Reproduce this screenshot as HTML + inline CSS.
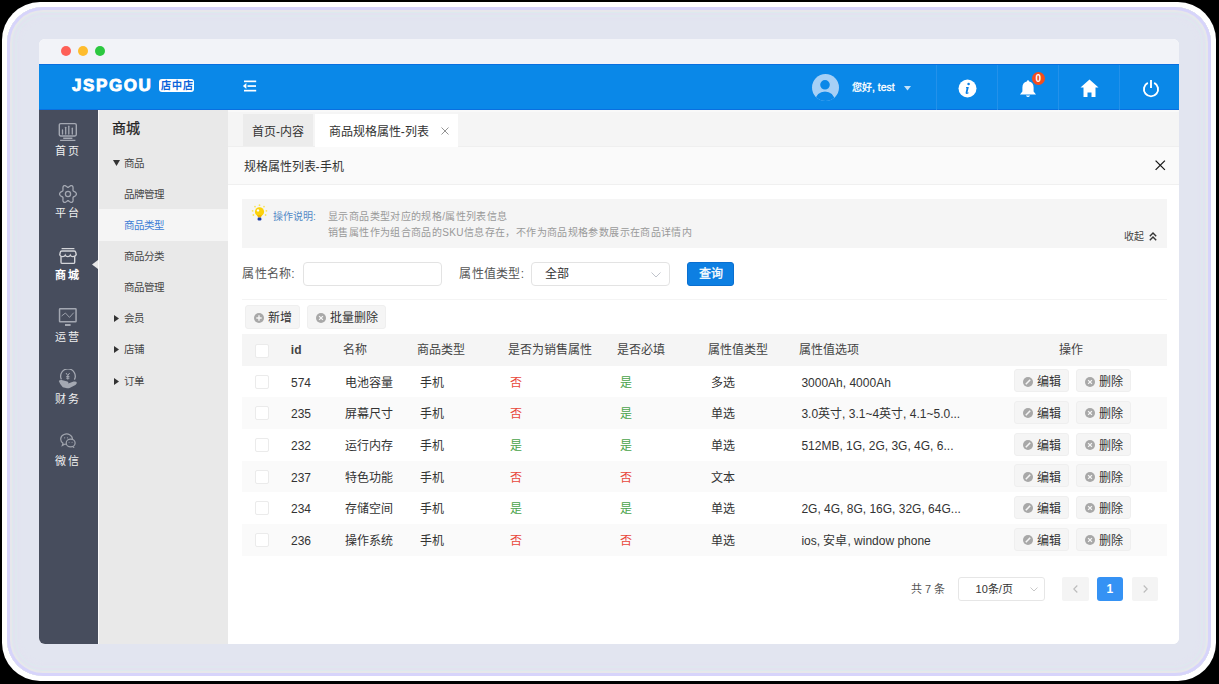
<!DOCTYPE html>
<html lang="zh-CN">
<head>
<meta charset="utf-8">
<style>
*{margin:0;padding:0;box-sizing:border-box;}
html,body{width:1219px;height:684px;overflow:hidden;background:#000;}
body{font-family:"Liberation Sans",sans-serif;position:relative;color:#333;}
.abs{position:absolute;}
#outer{position:absolute;left:2px;top:2px;width:1214px;height:679px;border-radius:38px;background:#fff;}
#glow{position:absolute;left:7px;top:7px;width:1204px;height:669px;border-radius:36px;background:#e2e5f0;
  box-shadow:inset 0 0 0 3px #d7d4fb, inset 0 0 0 5px #e7e7eb, inset 0 0 0 6px #dde9ee, inset 0 0 0 8px #e3e2f0, inset 0 0 0 10px #dfe7ef, inset 0 0 4px 12px #e3e3f0;}
#win{position:absolute;left:39px;top:39px;width:1140px;height:605px;border-radius:6px;overflow:hidden;background:#fff;}
#topbar{position:absolute;left:0;top:0;width:1140px;height:25px;background:#f2f3f8;}
.dot{position:absolute;top:7px;width:10px;height:10px;border-radius:50%;}
#header{position:absolute;left:0;top:25px;width:1140px;height:46px;background:#0a88e8;border-top:1px solid #0a6fe0;border-bottom:1px solid #0a6fe0;}
#side1{position:absolute;left:0;top:71px;width:59px;height:534px;background:#474d5d;}
#side1line{position:absolute;left:59px;top:71px;width:1px;height:534px;background:#fafafa;}
#side2{position:absolute;left:60px;top:71px;width:129px;height:534px;background:#e9e9e9;}
#main{position:absolute;left:189px;top:71px;width:951px;height:534px;background:#fff;}
.t{position:absolute;white-space:nowrap;line-height:1;}
.td{font-size:12px;color:#333;}
.th{font-size:12px;color:#444;}
.cb{width:14px;height:14px;border:1px solid #ebebeb;background:#fff;border-radius:2px;}
.btn{background:#f5f5f5;border-radius:3px;border:1px solid #efefef;}
</style>
</head>
<body>
<div id="outer"></div>
<div id="glow"></div>
<div id="win">
  <div id="topbar">
    <div class="dot" style="left:22px;background:#fe5f57;"></div>
    <div class="dot" style="left:39px;background:#febc2e;"></div>
    <div class="dot" style="left:56px;background:#2cc840;"></div>
  </div>
  <div id="header">
    <div class="t" style="left:33px;top:12px;font-size:17px;font-weight:bold;color:#fff;letter-spacing:1.6px;-webkit-text-stroke:0.9px #fff;">JSPGOU</div>
    <div class="abs" style="left:120px;top:14px;width:35px;height:13px;background:#fff;border-radius:3px;"></div>
    <div class="t" style="left:121.6px;top:15.5px;font-size:10px;font-weight:bold;color:#0a62da;letter-spacing:1.1px;">店中店</div>
    <svg class="abs" style="left:203px;top:13px;" width="16" height="16" viewBox="0 0 16 16">
      <rect x="2" y="2.5" width="12.2" height="1.7" fill="#fff"/>
      <rect x="5.5" y="7.2" width="8.5" height="1.7" fill="#fff"/>
      <path d="M0.9 8 L4.4 5.1 L4.4 10.9 Z" fill="#fff"/>
      <rect x="2" y="11.8" width="12.2" height="1.7" fill="#fff"/>
    </svg>
    <div class="abs" style="left:772.5px;top:8.5px;width:27px;height:27px;border-radius:50%;overflow:hidden;background:#a6d0f6;">
      <svg class="abs" style="left:-0.5px;top:-0.5px;" width="28" height="28" viewBox="0 0 28 28">
        <ellipse cx="14" cy="27.6" rx="10.4" ry="10" fill="#0a88e8" stroke="#a6d0f6" stroke-width="1.6"/>
        <circle cx="14" cy="11.8" r="5.6" fill="#0a88e8" stroke="#a6d0f6" stroke-width="1.6"/>
      </svg>
    </div>
    <div class="t" style="left:813px;top:17.5px;font-size:10px;color:#fff;-webkit-text-stroke:0.3px #fff;">您好<span style="font-size:10.4px;">, test</span></div>
    <svg class="abs" style="left:864.5px;top:21px;" width="7" height="5" viewBox="0 0 7 5"><path d="M0 0 L7 0 L3.5 4.5Z" fill="#c4e2fa"/></svg>
    <div class="abs" style="left:897px;top:0;width:1px;height:46px;background:#2391ea;"></div>
    <div class="abs" style="left:958px;top:0;width:1px;height:46px;background:#2391ea;"></div>
    <div class="abs" style="left:1019px;top:0;width:1px;height:46px;background:#2391ea;"></div>
    <div class="abs" style="left:1080px;top:0;width:1px;height:46px;background:#2391ea;"></div>
    <svg class="abs" style="left:919px;top:14px;" width="19" height="19" viewBox="0 0 19 19">
      <circle cx="9.5" cy="9.5" r="9" fill="#fff"/>
      <circle cx="10.6" cy="5" r="1.3" fill="#0a80e6"/>
      <path d="M8.2 8 L10.8 8 L9.6 13 Q9.4 14 10.4 13.4 L10.8 13.2 L10.6 14.2 Q9 15.3 8 14.8 Q7.4 14.4 7.7 13.3 L8.6 9.2 L7.9 9.2 Z" fill="#0a80e6"/>
    </svg>
    <svg class="abs" style="left:980px;top:14px;" width="18" height="19" viewBox="0 0 18 19">
      <path d="M9 1.2 Q10 1.2 10.2 2.4 Q14.6 3.4 14.6 8.6 L14.6 12.6 L17 15.6 L1 15.6 L3.4 12.6 L3.4 8.6 Q3.4 3.4 7.8 2.4 Q8 1.2 9 1.2 Z" fill="#fff"/>
      <path d="M6.8 16.4 Q9 19.6 11.2 16.4 Z" fill="#fff"/>
    </svg>
    <div class="abs" style="left:993px;top:7px;width:13px;height:13px;border-radius:50%;background:#f34d1c;"></div>
    <div class="t" style="left:996.5px;top:8.5px;font-size:10px;font-weight:bold;color:#fff;">0</div>
    <svg class="abs" style="left:1041px;top:14px;" width="19" height="19" viewBox="0 0 19 19">
      <path d="M9.5 0.5 L18.5 8.5 L15.5 8.5 L15.5 18 L11.5 18 L11.5 13.5 L7.5 13.5 L7.5 18 L3.5 18 L3.5 8.5 L0.5 8.5 Z" fill="#fff"/>
    </svg>
    <svg class="abs" style="left:1103px;top:13.5px;" width="18" height="19" viewBox="0 0 18 19">
      <path d="M5.8 3.9 A7.1 7.1 0 1 0 12.2 3.9" fill="none" stroke="#fff" stroke-width="1.9"/>
      <line x1="9" y1="0.9" x2="9" y2="9" stroke="#fff" stroke-width="1.9"/>
    </svg>
  </div>
  <div id="side1">
    <svg class="abs" style="left:19px;top:12px;" width="20" height="20" viewBox="0 0 20 20" fill="none" stroke="#a4a8b2" stroke-width="1.4">
      <rect x="1.3" y="1.6" width="17" height="12.4" rx="1.4"/>
      <g stroke-width="1.3" stroke-linecap="round"><line x1="4.5" y1="12" x2="4.5" y2="8"/><line x1="7.7" y1="12" x2="7.7" y2="5.3"/><line x1="10.8" y1="12" x2="10.8" y2="4.2"/><line x1="14.3" y1="12" x2="14.3" y2="6.2"/></g>
      <line x1="5.2" y1="16.2" x2="14.4" y2="16.2"/>
      <line x1="2.1" y1="18.4" x2="17.4" y2="18.4"/>
    </svg>
    <div class="t" style="left:16px;top:36px;font-size:11px;color:#f0f0f0;letter-spacing:1.6px;">首页</div>
    <svg class="abs" style="left:19px;top:74px;" width="20" height="20" viewBox="0 0 20 20" fill="none" stroke="#a4a8b2" stroke-width="1.3">
      <path d="M18.40 10.00 L18.33 10.49 L18.12 10.96 L17.80 11.39 L17.39 11.77 L16.93 12.09 L16.46 12.36 L16.02 12.60 L15.65 12.83 L15.35 13.07 L15.15 13.35 L15.04 13.68 L15.00 14.09 L15.01 14.57 L15.05 15.12 L15.07 15.71 L15.05 16.32 L14.97 16.91 L14.80 17.44 L14.54 17.88 L14.20 18.19 L13.79 18.37 L13.32 18.40 L12.83 18.30 L12.33 18.09 L11.86 17.80 L11.41 17.48 L11.01 17.18 L10.65 16.92 L10.31 16.75 L10.00 16.70 L9.69 16.75 L9.35 16.92 L8.99 17.18 L8.59 17.48 L8.14 17.80 L7.67 18.09 L7.17 18.30 L6.68 18.40 L6.21 18.37 L5.80 18.19 L5.46 17.88 L5.20 17.44 L5.03 16.91 L4.95 16.32 L4.93 15.71 L4.95 15.12 L4.99 14.57 L5.00 14.09 L4.96 13.68 L4.85 13.35 L4.65 13.07 L4.35 12.83 L3.98 12.60 L3.54 12.36 L3.07 12.09 L2.61 11.77 L2.20 11.39 L1.88 10.96 L1.67 10.49 L1.60 10.00 L1.67 9.51 L1.88 9.04 L2.20 8.61 L2.61 8.23 L3.07 7.91 L3.54 7.64 L3.98 7.40 L4.35 7.17 L4.65 6.93 L4.85 6.65 L4.96 6.32 L5.00 5.91 L4.99 5.43 L4.95 4.88 L4.93 4.29 L4.95 3.68 L5.03 3.09 L5.20 2.56 L5.46 2.12 L5.80 1.81 L6.21 1.63 L6.68 1.60 L7.17 1.70 L7.67 1.91 L8.14 2.20 L8.59 2.52 L8.99 2.82 L9.35 3.08 L9.69 3.25 L10.00 3.30 L10.31 3.25 L10.65 3.08 L11.01 2.82 L11.41 2.52 L11.86 2.20 L12.33 1.91 L12.83 1.70 L13.32 1.60 L13.79 1.63 L14.20 1.81 L14.54 2.12 L14.80 2.56 L14.97 3.09 L15.05 3.68 L15.07 4.29 L15.05 4.88 L15.01 5.43 L15.00 5.91 L15.04 6.32 L15.15 6.65 L15.35 6.93 L15.65 7.17 L16.02 7.40 L16.46 7.64 L16.93 7.91 L17.39 8.23 L17.80 8.61 L18.12 9.04 L18.33 9.51Z"/>
      <circle cx="10" cy="10" r="2.6"/>
    </svg>
    <div class="t" style="left:16px;top:98px;font-size:11px;color:#f0f0f0;letter-spacing:1.6px;">平台</div>
    <svg class="abs" style="left:20px;top:137px;" width="19" height="19" viewBox="0 0 19 19" fill="none" stroke="#d4d5d9" stroke-width="1.4">
      <line x1="2.6" y1="1.6" x2="15.4" y2="1.6"/>
      <path d="M0.8 7.8 Q1.2 9.6 3.7 9.6 Q5.6 9.6 6.25 8.2 Q6.9 9.6 8.8 9.6 Q10.7 9.6 11.3 8.2 Q11.9 9.6 13.8 9.6 Q16.6 9.6 17.2 7.8 L16.8 5.6 Q16.5 4 15.2 4 L2.8 4 Q1.5 4 1.2 5.6 Z"/>
      <path d="M2 9.8 V15.2 Q2 16.4 3.3 16.4 H14.4 Q15.7 16.4 15.7 15.2 V9.8"/>
    </svg>
    <div class="t" style="left:16px;top:160px;font-size:11px;color:#fff;letter-spacing:1.6px;font-weight:bold;">商城</div>
    <svg class="abs" style="left:19px;top:197px;" width="20" height="20" viewBox="0 0 20 20" fill="none" stroke="#a4a8b2" stroke-width="1.5">
      <rect x="1.55" y="1.85" width="16.5" height="13" rx="0.6"/>
      <path d="M3.6 9 L7.4 6 L11.5 10.4 L15.7 5.7" stroke-width="0.9"/>
      <rect x="7" y="17" width="5.6" height="2" fill="#a4a8b2" stroke="none"/>
    </svg>
    <div class="t" style="left:16px;top:222px;font-size:11px;color:#f0f0f0;letter-spacing:1.6px;">运营</div>
    <svg class="abs" style="left:19px;top:259px;" width="20" height="20" viewBox="0 0 20 20" fill="none" stroke="#a4a8b2" stroke-width="1.3">
      <path d="M3.4 10.4 A7.3 7.3 0 1 1 16.4 10.6"/>
      <path d="M8 4 L9.8 6.6 L11.6 4 M9.8 6.6 V10.6 M8.2 7.6 H11.4 M8.2 9.2 H11.4" stroke-width="1"/>
      <path d="M0.8 12 Q1.6 10.8 3.6 11 L9.4 12.6 Q11 13.2 10.2 14.4 L15.6 12.6 Q18.4 12 18.8 13.6 Q19 15 17.4 16 L11.6 19 Q10 19.4 8 19 L4.8 18.2 Q2 15.6 0.8 12 Z" fill="#a4a8b2" stroke="none"/>
    </svg>
    <div class="t" style="left:16px;top:284px;font-size:11px;color:#f0f0f0;letter-spacing:1.6px;">财务</div>
    <svg class="abs" style="left:21px;top:322.5px;" width="16" height="15.2" viewBox="0 0 18 17" fill="none" stroke="#a0a4ad" stroke-width="1.35">
      <path d="M14 6.8 A6.6 5.8 0 1 0 3.4 11.4 L2.6 14 L5.6 12.4 Q6.4 12.7 7.2 12.8"/>
      <ellipse cx="12" cy="11.2" rx="5" ry="4.4" />
      <path d="M14.8 15.2 L15.8 16.6"/>
      <circle cx="5.2" cy="5.4" r="0.7" fill="#9a9ea8" stroke="none"/>
      <circle cx="8.4" cy="5.4" r="0.7" fill="#9a9ea8" stroke="none"/>
      <circle cx="10.2" cy="10.4" r="0.6" fill="#9a9ea8" stroke="none"/>
      <circle cx="13.6" cy="10.4" r="0.6" fill="#9a9ea8" stroke="none"/>
    </svg>
    <div class="t" style="left:16px;top:346px;font-size:11px;color:#f0f0f0;letter-spacing:1.6px;">微信</div>
    <svg class="abs" style="left:53px;top:150px;" width="6" height="9" viewBox="0 0 6 9"><path d="M6 0 L0 4.5 L6 9 Z" fill="#e9e9e9"/></svg>
  </div>
  <div id="side1line"></div>
  <div id="side2">
    <div class="t" style="left:13px;top:11px;font-size:14px;color:#222;-webkit-text-stroke:0.25px #222;">商城</div>
    <svg class="abs" style="left:14px;top:50px;" width="7" height="6" viewBox="0 0 7 6"><path d="M0 0 L7 0 L3.5 6Z" fill="#333"/></svg>
    <div class="t" style="left:25px;top:48px;font-size:10.5px;color:#444;">商品</div>
    <div class="t" style="left:25px;top:79px;font-size:10.5px;color:#444;">品牌管理</div>
    <div class="abs" style="left:0;top:99px;width:129px;height:32px;background:#f5f5f5;"></div>
    <div class="t" style="left:25px;top:110px;font-size:10.5px;color:#3d7dd6;">商品类型</div>
    <div class="t" style="left:25px;top:141px;font-size:10.5px;color:#444;">商品分类</div>
    <div class="t" style="left:25px;top:172px;font-size:10.5px;color:#444;">商品管理</div>
    <svg class="abs" style="left:15px;top:205px;" width="5" height="7" viewBox="0 0 5 7"><path d="M0 0 L5 3.5 L0 7Z" fill="#333"/></svg>
    <div class="t" style="left:25px;top:203px;font-size:10.5px;color:#444;">会员</div>
    <svg class="abs" style="left:15px;top:236px;" width="5" height="7" viewBox="0 0 5 7"><path d="M0 0 L5 3.5 L0 7Z" fill="#333"/></svg>
    <div class="t" style="left:25px;top:234px;font-size:10.5px;color:#444;">店铺</div>
    <svg class="abs" style="left:15px;top:268px;" width="5" height="7" viewBox="0 0 5 7"><path d="M0 0 L5 3.5 L0 7Z" fill="#333"/></svg>
    <div class="t" style="left:25px;top:266px;font-size:10.5px;color:#444;">订单</div>
  </div>
  <div id="main">
    <div class="abs" style="left:0;top:0;width:951px;height:37px;background:#f5f5f5;border-bottom:1px solid #efefef;"></div><div class="abs" style="left:0;top:0;width:951px;height:2px;background:#f9f9f9;"></div>
    <div class="abs" style="left:14.6px;top:4.2px;width:70.7px;height:32px;background:#ececec;"></div>
    <div class="t" style="left:24px;top:15.5px;font-size:12px;color:#333;">首页-内容</div>
    <div class="abs" style="left:86.7px;top:4.2px;width:143.2px;height:32.8px;background:#fff;"></div>
    <div class="t" style="left:100.7px;top:15.5px;font-size:12px;color:#333;">商品规格属性-列表</div>
    <svg class="abs" style="left:213px;top:17px;" width="8" height="8" viewBox="0 0 8 8"><path d="M0.5 0.5 L7.5 7.5 M7.5 0.5 L0.5 7.5" stroke="#888" stroke-width="0.9"/></svg>
    <div class="abs" style="left:0;top:37px;width:951px;height:38px;background:#fafafa;border-bottom:1px solid #f0f0f0;"></div>
    <div class="t" style="left:15.6px;top:51px;font-size:12px;color:#333;">规格属性列表-手机</div>
    <svg class="abs" style="left:927px;top:50px;" width="10.5" height="10.5" viewBox="0 0 10.5 10.5"><path d="M0.6 0.6 L9.9 9.9 M9.9 0.6 L0.6 9.9" stroke="#1a1a1a" stroke-width="1.3"/></svg>

    <div class="abs" style="left:14px;top:89px;width:925px;height:48.5px;background:#f5f5f5;"></div>
    <svg class="abs" style="left:23px;top:94px;" width="17" height="19" viewBox="0 0 17 19">
      <g fill="#f8e45a"><circle cx="8.5" cy="1.2" r="0.9"/><circle cx="4" cy="2.6" r="0.9"/><circle cx="13" cy="2.6" r="0.9"/><circle cx="1.6" cy="6.8" r="0.9"/><circle cx="15.4" cy="6.8" r="0.9"/><circle cx="2.4" cy="11" r="0.9"/><circle cx="14.6" cy="11" r="0.9"/></g>
      <circle cx="8.5" cy="7.8" r="4.6" fill="#fcd20a"/>
      <path d="M6.2 11 L10.8 11 L10 13.4 L7 13.4 Z" fill="#f2b800"/>
      <circle cx="7" cy="6.4" r="1.2" fill="#fff"/>
      <rect x="6.6" y="13.6" width="3.8" height="2.8" rx="1.2" fill="#1c3aa8"/>
    </svg>
    <div class="t" style="left:44.5px;top:101.5px;font-size:10px;color:#5389c6;letter-spacing:0.15px;">操作说明:</div>
    <div class="t" style="left:100px;top:101.5px;font-size:10px;color:#999;letter-spacing:0.38px;">显示商品类型对应的规格/属性列表信息</div>
    <div class="t" style="left:100px;top:118.2px;font-size:10px;color:#999;letter-spacing:0.38px;">销售属性作为组合商品的SKU信息存在，不作为商品规格参数展示在商品详情内</div>
    <div class="t" style="left:895.6px;top:122px;font-size:10px;color:#444;letter-spacing:0.3px;">收起</div>
    <svg class="abs" style="left:920.5px;top:121.5px;" width="8" height="9" viewBox="0 0 8 9"><path d="M0.8 4.2 L4 1 L7.2 4.2 M0.8 8.2 L4 5 L7.2 8.2" fill="none" stroke="#333" stroke-width="1.4"/></svg>

    <div class="t" style="left:14.3px;top:157.5px;font-size:12px;color:#555;letter-spacing:0.25px;">属性名称:</div>
    <div class="abs" style="left:75px;top:152px;width:139px;height:24px;border:1px solid #e3e3e3;border-radius:4px;background:#fff;"></div>
    <div class="t" style="left:231.4px;top:157.5px;font-size:12px;color:#555;letter-spacing:0.25px;">属性值类型:</div>
    <div class="abs" style="left:303.2px;top:152px;width:138.6px;height:24px;border:1px solid #e3e3e3;border-radius:4px;background:#fff;"></div>
    <div class="t" style="left:316.8px;top:157.5px;font-size:12px;color:#333;">全部</div>
    <svg class="abs" style="left:422.5px;top:161.5px;" width="10" height="6" viewBox="0 0 10 6"><path d="M0.5 0.5 L5 5 L9.5 0.5" fill="none" stroke="#c0c4cc" stroke-width="1"/></svg>
    <div class="abs" style="left:459px;top:151.8px;width:47.3px;height:24.4px;background:#0d7fe2;border-radius:3px;border:1px solid #0a6fd0;"></div>
    <div class="t" style="left:470.5px;top:157.8px;font-size:12px;color:#fff;-webkit-text-stroke:0.3px #fff;">查询</div>
    <div class="abs" style="left:14px;top:189px;width:925px;height:1px;background:#f4f4f4;"></div>

    <div class="abs btn" style="left:17.2px;top:195.4px;width:54.7px;height:23.8px;"></div>
    <svg class="abs" style="left:25.6px;top:202.5px;" width="10" height="10" viewBox="0 0 10 10"><circle cx="5" cy="5" r="5" fill="#a8a8a8"/><path d="M5 2.3 L5 7.7 M2.3 5 L7.7 5" stroke="#f5f5f5" stroke-width="1.4"/></svg>
    <div class="t" style="left:39.9px;top:201.8px;font-size:12px;color:#333;">新增</div>
    <div class="abs btn" style="left:78.8px;top:195.4px;width:79.5px;height:23.8px;"></div>
    <svg class="abs" style="left:87.8px;top:202.5px;" width="10" height="10" viewBox="0 0 10 10"><circle cx="5" cy="5" r="5" fill="#a8a8a8"/><path d="M3.1 3.1 L6.9 6.9 M6.9 3.1 L3.1 6.9" stroke="#f5f5f5" stroke-width="1.3"/></svg>
    <div class="t" style="left:102.1px;top:201.8px;font-size:12px;color:#333;">批量删除</div>

    <div class="abs" style="left:14px;top:224.2px;width:925px;height:31.5px;background:#f5f5f5;"></div>
    <div class="abs cb" style="left:26.6px;top:234px;"></div>
    <div class="t th" style="left:62.8px;top:234px;font-weight:bold;color:#444;">id</div>
    <div class="t th" style="left:115px;top:234px;">名称</div>
    <div class="t th" style="left:189px;top:234px;">商品类型</div>
    <div class="t th" style="left:280.3px;top:234px;">是否为销售属性</div>
    <div class="t th" style="left:389.4px;top:234px;">是否必填</div>
    <div class="t th" style="left:480px;top:234px;">属性值类型</div>
    <div class="t th" style="left:571px;top:234px;">属性值选项</div>
    <div class="t th" style="left:831px;top:234px;">操作</div>
    <div class="abs" style="left:14px;top:255.70px;width:925px;height:31.67px;background:#fff;"></div>
    <div class="abs cb" style="left:26.6px;top:264.53px;"></div>
    <div class="t td" style="left:63px;top:266.53px;">574</div>
    <div class="t td" style="left:117px;top:266.53px;">电池容量</div>
    <div class="t td" style="left:191.5px;top:266.53px;">手机</div>
    <div class="t td" style="left:282.3px;top:266.53px;color:#e8473a;">否</div>
    <div class="t td" style="left:391.8px;top:266.53px;color:#4aa34a;">是</div>
    <div class="t td" style="left:482.5px;top:266.53px;">多选</div>
    <div class="t td" style="left:573.4px;top:266.53px;">3000Ah, 4000Ah</div>
    <div class="abs btn" style="left:786.2px;top:259.20px;width:55.3px;height:23px;">
      <svg class="abs" style="left:8px;top:6.5px;" width="10" height="10" viewBox="0 0 10 10"><circle cx="5" cy="5" r="5" fill="#a8a8a8"/><path d="M2.8 7.2 L7.2 2.8" stroke="#f5f5f5" stroke-width="1.6"/></svg>
      <div class="t" style="left:22px;top:6.3px;font-size:12px;color:#333;">编辑</div>
    </div>
    <div class="abs btn" style="left:848px;top:259.20px;width:55px;height:23px;">
      <svg class="abs" style="left:8px;top:6.5px;" width="10" height="10" viewBox="0 0 10 10"><circle cx="5" cy="5" r="5" fill="#a8a8a8"/><path d="M3.1 3.1 L6.9 6.9 M6.9 3.1 L3.1 6.9" stroke="#f5f5f5" stroke-width="1.3"/></svg>
      <div class="t" style="left:22px;top:6.3px;font-size:12px;color:#333;">删除</div>
    </div>
    <div class="abs" style="left:14px;top:287.37px;width:925px;height:31.67px;background:#fafafa;"></div>
    <div class="abs cb" style="left:26.6px;top:296.20px;"></div>
    <div class="t td" style="left:63px;top:298.20px;">235</div>
    <div class="t td" style="left:117px;top:298.20px;">屏幕尺寸</div>
    <div class="t td" style="left:191.5px;top:298.20px;">手机</div>
    <div class="t td" style="left:282.3px;top:298.20px;color:#e8473a;">否</div>
    <div class="t td" style="left:391.8px;top:298.20px;color:#4aa34a;">是</div>
    <div class="t td" style="left:482.5px;top:298.20px;">单选</div>
    <div class="t td" style="left:573.4px;top:298.20px;">3.0英寸, 3.1~4英寸, 4.1~5.0...</div>
    <div class="abs btn" style="left:786.2px;top:290.87px;width:55.3px;height:23px;">
      <svg class="abs" style="left:8px;top:6.5px;" width="10" height="10" viewBox="0 0 10 10"><circle cx="5" cy="5" r="5" fill="#a8a8a8"/><path d="M2.8 7.2 L7.2 2.8" stroke="#f5f5f5" stroke-width="1.6"/></svg>
      <div class="t" style="left:22px;top:6.3px;font-size:12px;color:#333;">编辑</div>
    </div>
    <div class="abs btn" style="left:848px;top:290.87px;width:55px;height:23px;">
      <svg class="abs" style="left:8px;top:6.5px;" width="10" height="10" viewBox="0 0 10 10"><circle cx="5" cy="5" r="5" fill="#a8a8a8"/><path d="M3.1 3.1 L6.9 6.9 M6.9 3.1 L3.1 6.9" stroke="#f5f5f5" stroke-width="1.3"/></svg>
      <div class="t" style="left:22px;top:6.3px;font-size:12px;color:#333;">删除</div>
    </div>
    <div class="abs" style="left:14px;top:319.04px;width:925px;height:31.67px;background:#fff;"></div>
    <div class="abs cb" style="left:26.6px;top:327.87px;"></div>
    <div class="t td" style="left:63px;top:329.87px;">232</div>
    <div class="t td" style="left:117px;top:329.87px;">运行内存</div>
    <div class="t td" style="left:191.5px;top:329.87px;">手机</div>
    <div class="t td" style="left:282.3px;top:329.87px;color:#4aa34a;">是</div>
    <div class="t td" style="left:391.8px;top:329.87px;color:#4aa34a;">是</div>
    <div class="t td" style="left:482.5px;top:329.87px;">单选</div>
    <div class="t td" style="left:573.4px;top:329.87px;">512MB, 1G, 2G, 3G, 4G, 6...</div>
    <div class="abs btn" style="left:786.2px;top:322.54px;width:55.3px;height:23px;">
      <svg class="abs" style="left:8px;top:6.5px;" width="10" height="10" viewBox="0 0 10 10"><circle cx="5" cy="5" r="5" fill="#a8a8a8"/><path d="M2.8 7.2 L7.2 2.8" stroke="#f5f5f5" stroke-width="1.6"/></svg>
      <div class="t" style="left:22px;top:6.3px;font-size:12px;color:#333;">编辑</div>
    </div>
    <div class="abs btn" style="left:848px;top:322.54px;width:55px;height:23px;">
      <svg class="abs" style="left:8px;top:6.5px;" width="10" height="10" viewBox="0 0 10 10"><circle cx="5" cy="5" r="5" fill="#a8a8a8"/><path d="M3.1 3.1 L6.9 6.9 M6.9 3.1 L3.1 6.9" stroke="#f5f5f5" stroke-width="1.3"/></svg>
      <div class="t" style="left:22px;top:6.3px;font-size:12px;color:#333;">删除</div>
    </div>
    <div class="abs" style="left:14px;top:350.71px;width:925px;height:31.67px;background:#fafafa;"></div>
    <div class="abs cb" style="left:26.6px;top:359.54px;"></div>
    <div class="t td" style="left:63px;top:361.54px;">237</div>
    <div class="t td" style="left:117px;top:361.54px;">特色功能</div>
    <div class="t td" style="left:191.5px;top:361.54px;">手机</div>
    <div class="t td" style="left:282.3px;top:361.54px;color:#e8473a;">否</div>
    <div class="t td" style="left:391.8px;top:361.54px;color:#e8473a;">否</div>
    <div class="t td" style="left:482.5px;top:361.54px;">文本</div>
    <div class="t td" style="left:573.4px;top:361.54px;"></div>
    <div class="abs btn" style="left:786.2px;top:354.21px;width:55.3px;height:23px;">
      <svg class="abs" style="left:8px;top:6.5px;" width="10" height="10" viewBox="0 0 10 10"><circle cx="5" cy="5" r="5" fill="#a8a8a8"/><path d="M2.8 7.2 L7.2 2.8" stroke="#f5f5f5" stroke-width="1.6"/></svg>
      <div class="t" style="left:22px;top:6.3px;font-size:12px;color:#333;">编辑</div>
    </div>
    <div class="abs btn" style="left:848px;top:354.21px;width:55px;height:23px;">
      <svg class="abs" style="left:8px;top:6.5px;" width="10" height="10" viewBox="0 0 10 10"><circle cx="5" cy="5" r="5" fill="#a8a8a8"/><path d="M3.1 3.1 L6.9 6.9 M6.9 3.1 L3.1 6.9" stroke="#f5f5f5" stroke-width="1.3"/></svg>
      <div class="t" style="left:22px;top:6.3px;font-size:12px;color:#333;">删除</div>
    </div>
    <div class="abs" style="left:14px;top:382.38px;width:925px;height:31.67px;background:#fff;"></div>
    <div class="abs cb" style="left:26.6px;top:391.21px;"></div>
    <div class="t td" style="left:63px;top:393.21px;">234</div>
    <div class="t td" style="left:117px;top:393.21px;">存储空间</div>
    <div class="t td" style="left:191.5px;top:393.21px;">手机</div>
    <div class="t td" style="left:282.3px;top:393.21px;color:#4aa34a;">是</div>
    <div class="t td" style="left:391.8px;top:393.21px;color:#4aa34a;">是</div>
    <div class="t td" style="left:482.5px;top:393.21px;">单选</div>
    <div class="t td" style="left:573.4px;top:393.21px;">2G, 4G, 8G, 16G, 32G, 64G...</div>
    <div class="abs btn" style="left:786.2px;top:385.88px;width:55.3px;height:23px;">
      <svg class="abs" style="left:8px;top:6.5px;" width="10" height="10" viewBox="0 0 10 10"><circle cx="5" cy="5" r="5" fill="#a8a8a8"/><path d="M2.8 7.2 L7.2 2.8" stroke="#f5f5f5" stroke-width="1.6"/></svg>
      <div class="t" style="left:22px;top:6.3px;font-size:12px;color:#333;">编辑</div>
    </div>
    <div class="abs btn" style="left:848px;top:385.88px;width:55px;height:23px;">
      <svg class="abs" style="left:8px;top:6.5px;" width="10" height="10" viewBox="0 0 10 10"><circle cx="5" cy="5" r="5" fill="#a8a8a8"/><path d="M3.1 3.1 L6.9 6.9 M6.9 3.1 L3.1 6.9" stroke="#f5f5f5" stroke-width="1.3"/></svg>
      <div class="t" style="left:22px;top:6.3px;font-size:12px;color:#333;">删除</div>
    </div>
    <div class="abs" style="left:14px;top:414.05px;width:925px;height:31.67px;background:#fafafa;"></div>
    <div class="abs cb" style="left:26.6px;top:422.88px;"></div>
    <div class="t td" style="left:63px;top:424.88px;">236</div>
    <div class="t td" style="left:117px;top:424.88px;">操作系统</div>
    <div class="t td" style="left:191.5px;top:424.88px;">手机</div>
    <div class="t td" style="left:282.3px;top:424.88px;color:#e8473a;">否</div>
    <div class="t td" style="left:391.8px;top:424.88px;color:#e8473a;">否</div>
    <div class="t td" style="left:482.5px;top:424.88px;">单选</div>
    <div class="t td" style="left:573.4px;top:424.88px;">ios, 安卓, window phone</div>
    <div class="abs btn" style="left:786.2px;top:417.55px;width:55.3px;height:23px;">
      <svg class="abs" style="left:8px;top:6.5px;" width="10" height="10" viewBox="0 0 10 10"><circle cx="5" cy="5" r="5" fill="#a8a8a8"/><path d="M2.8 7.2 L7.2 2.8" stroke="#f5f5f5" stroke-width="1.6"/></svg>
      <div class="t" style="left:22px;top:6.3px;font-size:12px;color:#333;">编辑</div>
    </div>
    <div class="abs btn" style="left:848px;top:417.55px;width:55px;height:23px;">
      <svg class="abs" style="left:8px;top:6.5px;" width="10" height="10" viewBox="0 0 10 10"><circle cx="5" cy="5" r="5" fill="#a8a8a8"/><path d="M3.1 3.1 L6.9 6.9 M6.9 3.1 L3.1 6.9" stroke="#f5f5f5" stroke-width="1.3"/></svg>
      <div class="t" style="left:22px;top:6.3px;font-size:12px;color:#333;">删除</div>
    </div>

    <div class="t" style="left:683px;top:473.7px;font-size:11px;color:#555;">共 7 条</div>
    <div class="abs" style="left:730.2px;top:466.7px;width:86.4px;height:24px;border:1px solid #e6e6e6;border-radius:3px;background:#fff;"></div>
    <div class="t" style="left:747.6px;top:474px;font-size:11px;color:#333;">10条/页</div>
    <svg class="abs" style="left:802.3px;top:477px;" width="8" height="5" viewBox="0 0 8 5"><path d="M0.5 0.5 L4 4 L7.5 0.5" fill="none" stroke="#c8c8c8" stroke-width="1"/></svg>
    <div class="abs" style="left:834.3px;top:466.7px;width:26.6px;height:24px;background:#f4f4f4;border-radius:2px;"></div>
    <svg class="abs" style="left:845px;top:475px;" width="5" height="8" viewBox="0 0 5 8"><path d="M4.3 0.5 L0.8 4 L4.3 7.5" fill="none" stroke="#bdbdbd" stroke-width="1.2"/></svg>
    <div class="abs" style="left:869.2px;top:466.7px;width:25.8px;height:24px;background:#3592f4;border-radius:3px;"></div>
    <div class="t" style="left:878.5px;top:472.5px;font-size:12px;font-weight:bold;color:#fff;">1</div>
    <div class="abs" style="left:904.4px;top:466.7px;width:26px;height:24px;background:#f4f4f4;border-radius:2px;"></div>
    <svg class="abs" style="left:915px;top:475px;" width="5" height="8" viewBox="0 0 5 8"><path d="M0.7 0.5 L4.2 4 L0.7 7.5" fill="none" stroke="#bdbdbd" stroke-width="1.2"/></svg>
  </div>
</div>
</body>
</html>
